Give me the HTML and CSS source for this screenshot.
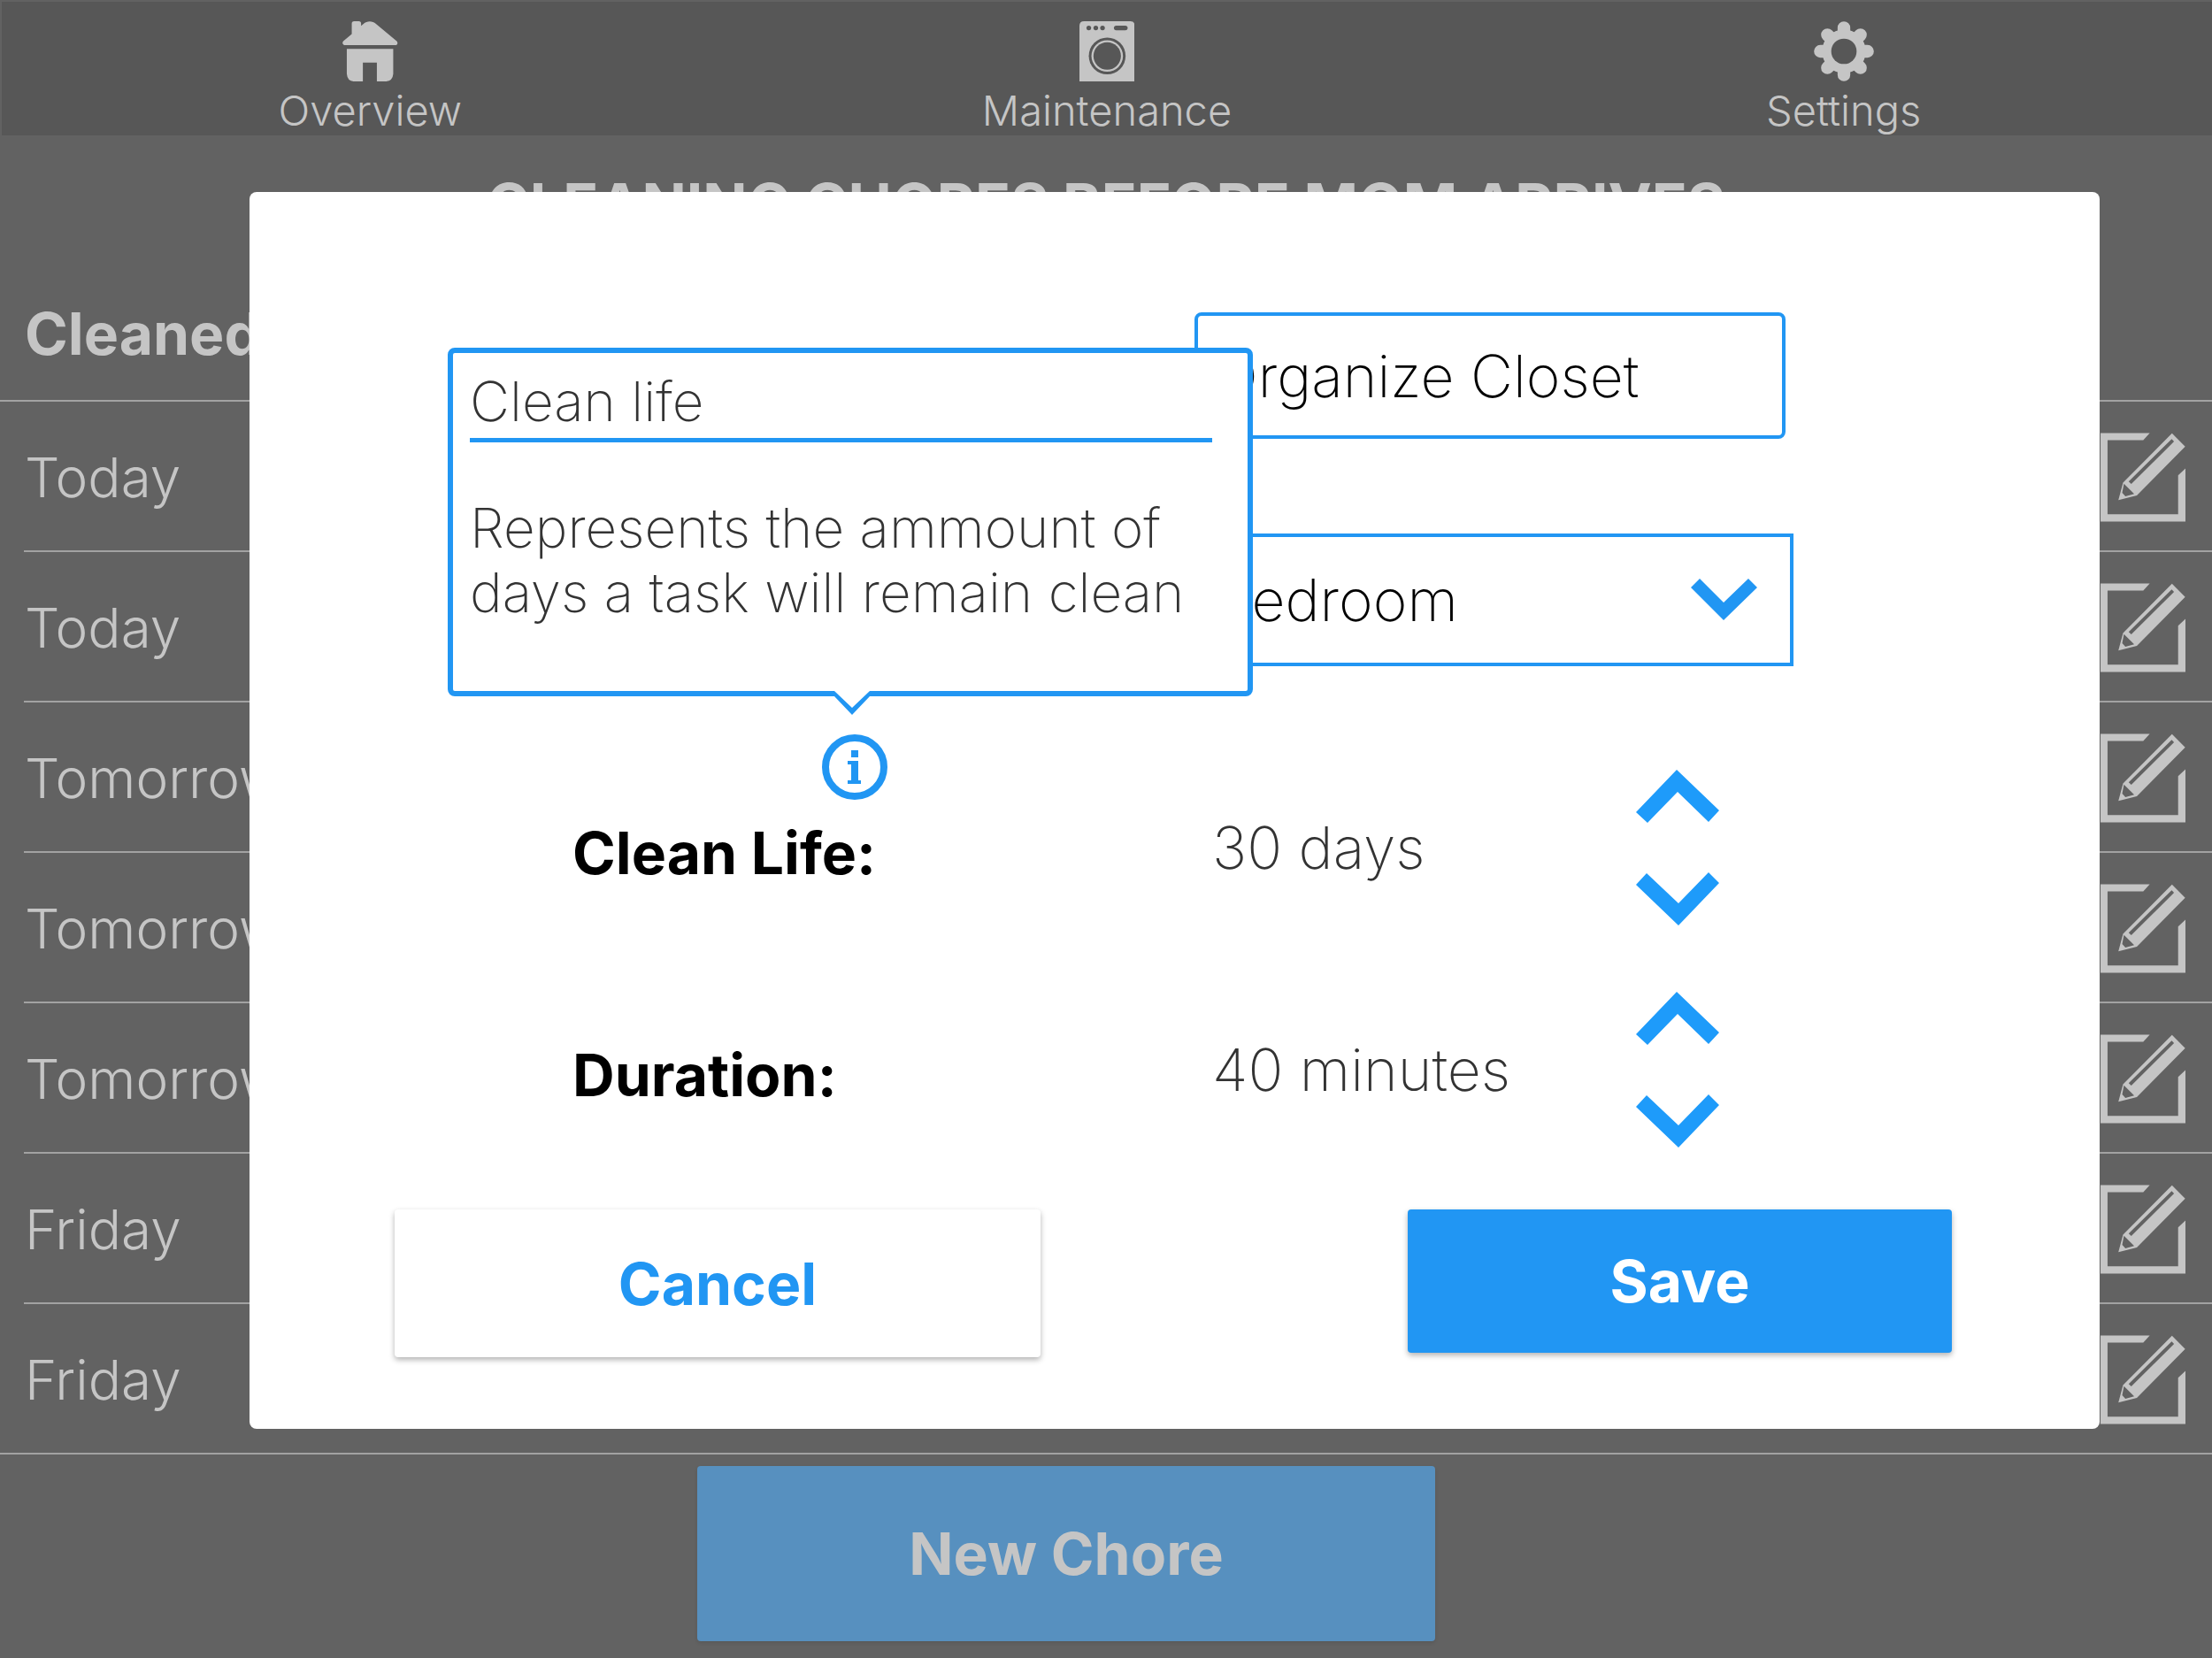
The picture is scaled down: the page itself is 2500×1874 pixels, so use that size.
FILE: index.html
```html
<!DOCTYPE html>
<html lang="en">
<head>
<meta charset="utf-8">
<meta name="viewport" content="width=device-width, initial-scale=1">
<title>Cleaning chores</title>
<link rel="stylesheet" href="styles.css">
</head>
<body>
<svg class="sprite" aria-hidden="true">
  <symbol id="edit" viewBox="0 0 290 302">
    <path d="M0 0H168L146 24H24V277H265V144L290 121V302H0Z"/>
    <path fill-rule="evenodd" d="M61 229L77 169L244 1L289 46L124 213ZM96 165L105 174L251 29L243 20ZM80 173L74 204L85 216L115 208Z"/>
  </symbol>
  <symbol id="up" viewBox="0 0 94 60">
    <path d="M46 0L94 46L82 59L47 25L13 60L0 48Z"/>
  </symbol>
  <symbol id="down" viewBox="0 0 94 60">
    <path d="M48 60L0 14L12 1L48 35L82 0L94 12Z"/>
  </symbol>
</svg>

<nav class="nav">
  <a class="nav-item" href="#overview">
    <svg class="nav-icon" viewBox="0 0 190 206" aria-hidden="true"><path d="M10 82H180C189 82 191 74 186 68L115 9C103-2 84-2 72 9L64 16V8Q64 0 56 0H40Q32 0 32 8V44L3 68C-2 74 1 82 10 82Z"/><path d="M15 95H174V180Q172 204 150 206H118V142H70V206H38Q17 204 15 180Z"/></svg>
    <span>Overview</span>
  </a>
  <a class="nav-item" href="#maintenance">
    <svg class="nav-icon" viewBox="0 0 190 206" aria-hidden="true"><path d="M0 206V16Q0 0 16 0H174Q190 0 190 16V206Z"/><g class="cut"><circle cx="32" cy="23" r="8"/><circle cx="56" cy="23" r="8"/><circle cx="79" cy="23" r="8"/><rect x="118" y="15" width="47" height="16" rx="8"/><circle cx="95" cy="119" r="63"/></g><circle cx="95" cy="119" r="54"/><circle class="cut" cx="95" cy="119" r="47"/></svg>
    <span>Maintenance</span>
  </a>
  <a class="nav-item" href="#settings">
    <svg class="nav-icon" viewBox="0 0 204 204" aria-hidden="true"><circle cx="102" cy="102" r="74"/><path class="teeth" d="M102 22V182M22 102H182M46 46L158 158M158 46L46 158"/><circle class="cut" cx="102" cy="102" r="43"/></svg>
    <span>Settings</span>
  </a>
</nav>

<main class="page">
  <h1 class="title">CLEANING CHORES BEFORE MOM ARRIVES</h1>
  <table class="chores">
    <thead>
      <tr><th scope="col">Cleaned</th><td></td></tr>
    </thead>
    <tbody>
      <tr><td>Today</td><td class="action"><button class="edit" aria-label="Edit chore"><svg><use href="#edit"/></svg></button></td></tr>
      <tr><td>Today</td><td class="action"><button class="edit" aria-label="Edit chore"><svg><use href="#edit"/></svg></button></td></tr>
      <tr><td>Tomorrow</td><td class="action"><button class="edit" aria-label="Edit chore"><svg><use href="#edit"/></svg></button></td></tr>
      <tr><td>Tomorrow</td><td class="action"><button class="edit" aria-label="Edit chore"><svg><use href="#edit"/></svg></button></td></tr>
      <tr><td>Tomorrow</td><td class="action"><button class="edit" aria-label="Edit chore"><svg><use href="#edit"/></svg></button></td></tr>
      <tr><td>Friday</td><td class="action"><button class="edit" aria-label="Edit chore"><svg><use href="#edit"/></svg></button></td></tr>
      <tr><td>Friday</td><td class="action"><button class="edit" aria-label="Edit chore"><svg><use href="#edit"/></svg></button></td></tr>
    </tbody>
  </table>
  <button class="button new-chore">New Chore</button>
</main>

<div class="overlay">
  <form class="modal" role="dialog" aria-label="Edit chore">
    <div class="fields">
      <input class="field name" type="text" aria-label="Chore name" value="Organize Closet">
      <div class="room">
        <select class="field" aria-label="Room"><option>Bedroom</option></select>
        <svg class="room-arrow" viewBox="0 0 75 47" aria-hidden="true"><path d="M37 47L0 10L10 0L37 27L65 0L75 10Z"/></svg>
      </div>

      <div class="label">
        <label for="life">Clean Life:</label>
        <button class="info" type="button" aria-label="About clean life" aria-describedby="life-tip">
          <svg viewBox="0 0 74 74" aria-hidden="true"><circle class="ring" cx="37" cy="37" r="33"/><path d="M33 18H41V26H33ZM29 30H41V52H44V56H29V52H33V34H29Z"/></svg>
        </button>
        <div class="tip" id="life-tip" role="tooltip">
          <h2 class="tip-title">Clean life</h2>
          <p class="tip-text">Represents the ammount of<br>days a task will remain clean</p>
          <svg class="tip-arrow" viewBox="0 0 40 27" aria-hidden="true"><path class="tip-fill" d="M0 0H40V6L20 24L0 6Z"/><path d="M0 0L20 19L40 0V6L20 27L0 6Z"/></svg>
        </div>
      </div>
      <output class="value" id="life">30 days</output>
      <div class="stepper">
        <button type="button" aria-label="More days"><svg><use href="#up"/></svg></button>
        <button type="button" aria-label="Fewer days"><svg><use href="#down"/></svg></button>
      </div>

      <div class="label"><label for="duration">Duration:</label></div>
      <output class="value" id="duration">40 minutes</output>
      <div class="stepper">
        <button type="button" aria-label="More minutes"><svg><use href="#up"/></svg></button>
        <button type="button" aria-label="Fewer minutes"><svg><use href="#down"/></svg></button>
      </div>
    </div>
    <div class="actions">
      <button class="button cancel" type="button">Cancel</button>
      <button class="button save" type="submit">Save</button>
    </div>
  </form>
</div>
</body>
</html>
```

FILE: styles.css
```css
:root {
  --blue: #2196f3;
  --dim: #c5c5c5;
  --bar: #575757;
  --page: #626262;
  --line: #a2a2a2;
}

* {
  box-sizing: border-box;
}

body {
  margin: 0;
  min-height: 100vh;
  position: relative;
  background: var(--page);
  color: var(--dim);
  font-family: Inter, "Liberation Sans", sans-serif;
  font-size: 62px;
  font-weight: 300;
}

button,
input,
select {
  font: inherit;
  color: inherit;
  margin: 0;
  padding: 0;
  border: 0;
  background: none;
}

svg {
  display: block;
  fill: currentColor;
}

.sprite {
  position: absolute;
  width: 0;
  height: 0;
}

/* Top navigation */
.nav {
  display: grid;
  grid-template-columns: repeat(3, 1fr);
  height: 153px;
  border-top: 2px solid var(--page);
  border-left: 2px solid var(--page);
  background: var(--bar);
}

.nav-item {
  display: flex;
  flex-direction: column;
  align-items: center;
  gap: 6px;
  padding-top: 22px;
  color: inherit;
  font-size: 47px;
  line-height: 54px;
  text-decoration: none;
}

.nav-icon {
  height: 68px;
}

.cut {
  fill: var(--bar);
}

.teeth {
  stroke: currentColor;
  stroke-width: 43;
  stroke-linecap: round;
}

/* Chore list */
.page {
  display: flex;
  flex-direction: column;
}

.title {
  margin: 0;
  padding-top: 40px;
  font-size: 66px;
  font-weight: 700;
  line-height: 76px;
  text-align: center;
}

.chores {
  width: 100%;
  margin-top: 33px;
  border-collapse: separate;
  border-spacing: 0;
}

.chores th,
.chores td {
  height: 170px;
  padding: 0 0 0 28px;
  text-align: left;
}

.chores thead th,
.chores thead td {
  height: 152px;
  border-bottom: 2px solid var(--line);
  font-size: 66px;
  font-weight: 700;
}

.chores tbody tr {
  background: linear-gradient(var(--line), var(--line)) 27px 100% / 100% 2px no-repeat;
}

.chores tbody tr:last-child {
  background-position: 0 100%;
}

.chores .action {
  width: 156px;
  padding: 0 30px;
}

.edit {
  display: block;
}

.edit svg {
  width: 96px;
  height: 101px;
}

.button {
  border-radius: 4px;
  font-size: 66px;
  font-weight: 700;
  box-shadow: 0 3px 6px rgba(0, 0, 0, 0.3);
}

.new-chore {
  align-self: center;
  width: 834px;
  height: 198px;
  margin: 13px 90px 19px 0;
  background: #5790bf;
  box-shadow: 0 2px 4px rgba(0, 0, 0, 0.1);
}

/* Edit dialog */
.overlay {
  position: absolute;
  inset: 0;
  padding: 217px 127px 0 282px;
}

.modal {
  padding: 136px 0 81px;
  border-radius: 8px;
  background: #fff;
  color: #000;
  font-size: 66px;
  font-weight: 200;
}

.fields {
  display: grid;
  grid-template-columns: 703fr 499fr 524fr;
  row-gap: 75px;
  padding: 0 0 70px 365px;
}

.field {
  width: 100%;
  height: 100%;
  padding-left: 18px;
  border: 4px solid var(--blue);
  background: #fff;
}

.name {
  grid-column: 2 / 4;
  width: 668px;
  height: 143px;
  border-radius: 8px;
}

.room {
  grid-column: 2 / 4;
  position: relative;
  width: 677px;
  height: 150px;
  margin: 32px 0 42px;
}

.room .field {
  appearance: none;
}

.room-arrow {
  position: absolute;
  top: 51px;
  right: 41px;
  width: 75px;
  color: var(--blue);
  pointer-events: none;
}

.label {
  position: relative;
  padding-top: 12px;
  align-self: center;
  font-weight: 700;
  line-height: 76px;
}

.value {
  align-self: center;
  padding-left: 20px;
  color: #333;
}

.stepper {
  display: flex;
  flex-direction: column;
  align-items: flex-start;
  gap: 56px;
  color: #1e9bfa;
}

.stepper svg {
  width: 94px;
  height: 60px;
}

/* Help popover above the label */
.info {
  position: absolute;
  left: 282px;
  bottom: 100%;
  margin-bottom: 10px;
  color: var(--blue);
}

.info svg {
  width: 74px;
  height: 74px;
}

.ring {
  fill: none;
  stroke: currentColor;
  stroke-width: 8;
}

.tip {
  position: absolute;
  left: -141px;
  bottom: 100%;
  width: 910px;
  height: 394px;
  margin-bottom: 127px;
  padding: 18px 40px 0 19px;
  border: 6px solid var(--blue);
  border-radius: 8px;
  background: #fff;
  color: #333;
  font-size: 62px;
  font-weight: 200;
}

.tip-title {
  margin: 0 0 60px;
  padding-bottom: 4px;
  border-bottom: 5px solid var(--blue);
  font-size: inherit;
  font-weight: inherit;
  line-height: 74px;
}

.tip-text {
  margin: 0;
  line-height: 73px;
  white-space: nowrap;
}

.tip-arrow {
  position: absolute;
  left: 431px;
  top: 100%;
  width: 40px;
  color: var(--blue);
}

.tip-fill {
  fill: #fff;
}

.actions {
  display: flex;
  justify-content: space-between;
  align-items: flex-start;
  padding: 0 167px 0 164px;
}

.cancel {
  width: 730px;
  height: 167px;
  color: var(--blue);
}

.save {
  width: 615px;
  height: 162px;
  background: var(--blue);
  color: #fff;
}
```
